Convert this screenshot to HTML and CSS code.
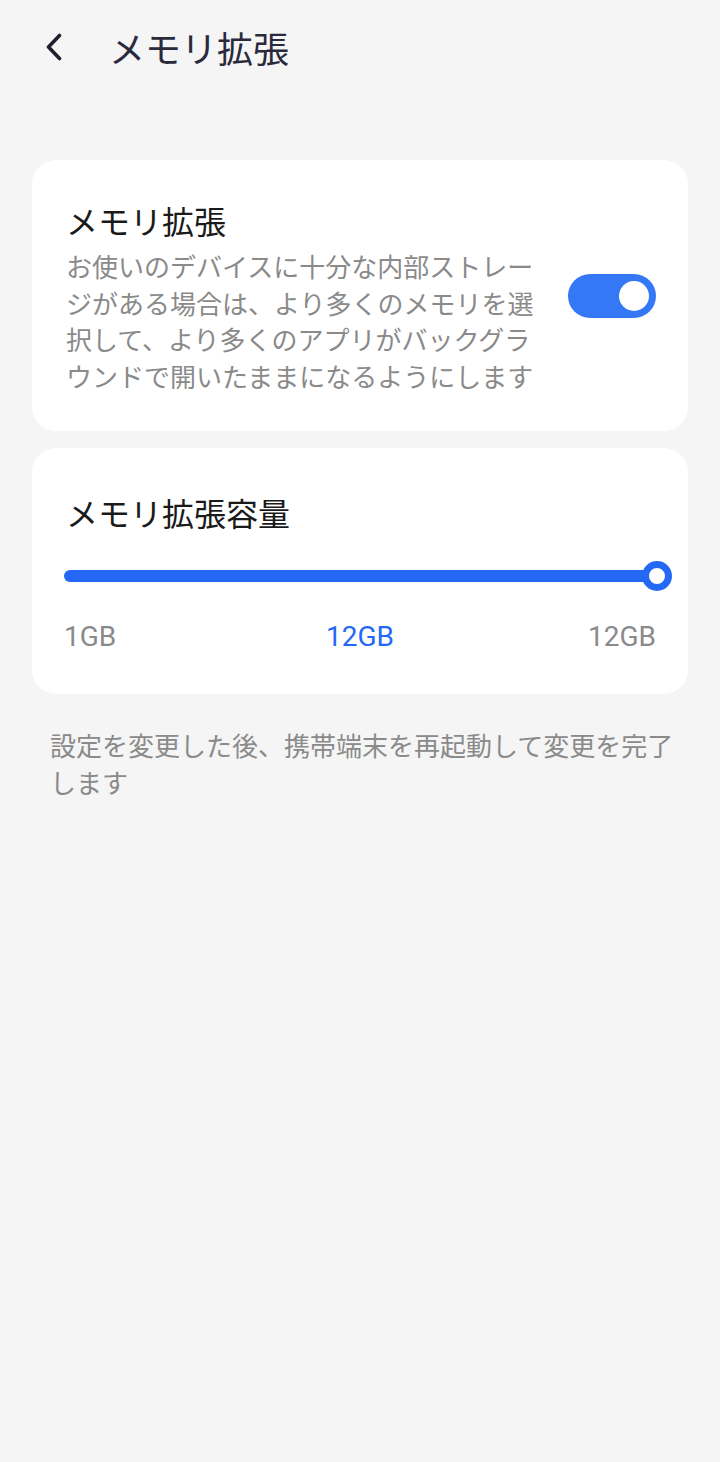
FILE: index.html
```html
<!DOCTYPE html>
<html lang="ja">
<head>
<meta charset="UTF-8">
<meta name="viewport" content="width=device-width, initial-scale=1.0">
<title>メモリ拡張</title>
<link rel="stylesheet" href="styles.css">
</head>
<body>
<div class="header">
    <button class="back-button" aria-label="戻る">
        <svg width="17" height="28" viewBox="0 0 17 28">
            <path d="M14.5 2.5 L3.5 14 L14.5 25.5" fill="none" stroke="#1f1f2e" stroke-width="3.6" stroke-linecap="round" stroke-linejoin="round"/>
        </svg>
    </button>
    <h1 class="header-title">メモリ拡張</h1>
</div>

<div class="content">
    <div class="card card-switch">
        <div class="card-text">
            <div class="card-title">メモリ拡張</div>
            <div class="card-desc">お使いのデバイスに十分な内部ストレージがある場合は、より多くのメモリを選択して、より多くのアプリがバックグラウンドで開いたままになるようにします</div>
        </div>
        <div class="toggle on">
            <div class="toggle-knob"></div>
        </div>
    </div>

    <div class="card card-slider">
        <div class="card-title">メモリ拡張容量</div>
        <div class="slider">
            <div class="slider-track"></div>
            <div class="slider-knob"></div>
        </div>
        <div class="slider-labels">
            <span class="label-min">1GB</span>
            <span class="label-value">12GB</span>
            <span class="label-max">12GB</span>
        </div>
    </div>

    <p class="note">設定を変更した後、携帯端末を再起動して変更を完了します</p>
</div>
</body>
</html>
```

FILE: styles.css
```css
body {
    margin: 0;
    font-family: Roboto, "Noto Sans CJK JP", sans-serif;
    background-color: #f5f5f5;
}

.header {
    display: flex;
    align-items: center;
    height: 94px;
    padding-left: 45px;
}

.back-button {
    display: flex;
    padding: 0;
    border: none;
    background: none;
    cursor: pointer;
}

.header-title {
    margin: 0 0 0 47px;
    font-size: 36px;
    font-weight: 400;
    color: #2a2a3c;
    font-family: "Noto Sans CJK JP", sans-serif;
}

.content {
    padding-top: 66px;
}

.card {
    margin: 0 32px 17px;
    background-color: #fff;
    border-radius: 24px;
}

.card-title {
    font-family: "Noto Sans CJK JP", sans-serif;
    font-size: 32px;
    line-height: 44px;
    color: #1a1a1a;
}

.card-switch {
    display: flex;
    align-items: center;
    padding: 38px 32px 37px 34px;
}

.card-text {
    flex: 1;
    margin-right: 24px;
}

.card-desc {
    margin-top: 6px;
    font-family: "Noto Sans CJK JP", sans-serif;
    font-size: 26px;
    line-height: 36.5px;
    color: #8a8a8a;
}

.toggle {
    position: relative;
    width: 88px;
    height: 44px;
    border-radius: 22px;
    background-color: #d0d0d0;
    flex-shrink: 0;
}

.toggle.on {
    background-color: #3478f6;
}

.toggle-knob {
    position: absolute;
    top: 7px;
    left: 7px;
    width: 30px;
    height: 30px;
    border-radius: 50%;
    background-color: #fff;
}

.toggle.on .toggle-knob {
    left: auto;
    right: 7px;
}

.card-slider {
    padding: 42px 32px 39px 34px;
}

.slider {
    display: flex;
    align-items: center;
    margin: 27px -16px 0 -2px;
    height: 30px;
}

.slider-track {
    flex: 1;
    height: 12px;
    border-radius: 6px;
    background-color: #2468f6;
}

.slider-knob {
    box-sizing: border-box;
    width: 30px;
    height: 30px;
    margin-left: -15px;
    border: 7px solid #2468f6;
    border-radius: 50%;
    background-color: #fff;
}

.slider-labels {
    display: grid;
    grid-template-columns: 1fr auto 1fr;
    margin: 28px 0 0 -2px;
    font-size: 28px;
    line-height: 36px;
    color: #8a8a8a;
}

.label-value {
    color: #2468f6;
}

.label-max {
    justify-self: end;
}

.note {
    margin: 32px 0 0;
    padding: 0 34px 0 50px;
    font-family: "Noto Sans CJK JP", sans-serif;
    font-size: 26px;
    line-height: 37px;
    color: #8a8a8a;
}
```
